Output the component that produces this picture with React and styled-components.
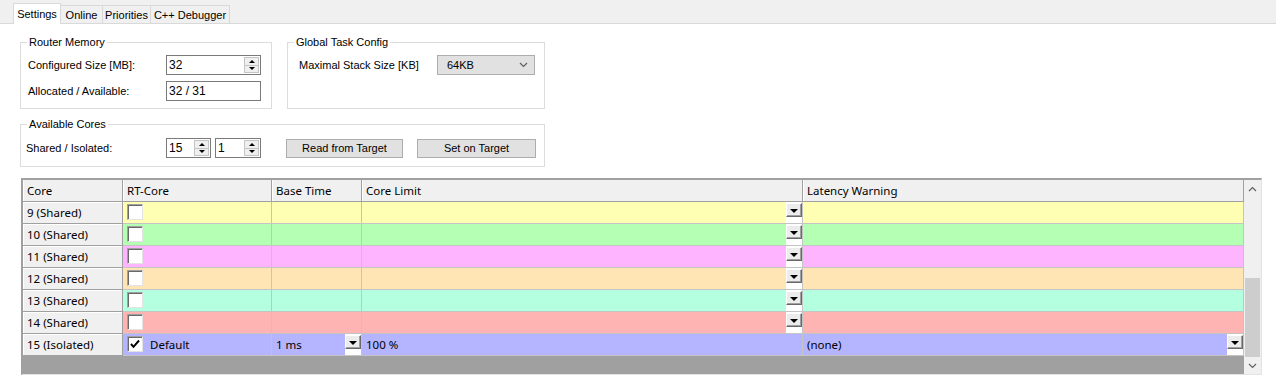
import React from 'react'
import styled, { createGlobalStyle } from 'styled-components'

const GlobalStyle = createGlobalStyle`
  html, body {
    margin: 0;
    padding: 0;
    background: #fff;
  }
  body {
    font-family: "Liberation Sans", Arial, sans-serif;
    font-size: 11px;
    color: #000;
  }
  * {
    box-sizing: border-box;
  }
`

const Window = styled.div`
  width: 1276px;
  height: 384px;
  overflow: hidden;
  background: #fff;
`

const TabStrip = styled.div`
  height: 24px;
  background: #f0f0f0;
  border-bottom: 1px solid #d9d9d9;
  display: flex;
  align-items: flex-end;
  padding-left: 13px;
`

const Tab = styled.div`
  width: ${(p) => p.$w}px;
  height: ${(p) => (p.$active ? 21 : 18)}px;
  margin-bottom: ${(p) => (p.$active ? -1 : 0)}px;
  margin-left: ${(p) => (p.$active ? 0 : -1)}px;
  background: ${(p) => (p.$active ? '#fff' : '#f0f0f0')};
  border: 1px solid #d9d9d9;
  border-bottom: none;
  display: flex;
  align-items: center;
  justify-content: center;
  position: relative;
  z-index: ${(p) => (p.$active ? 1 : 0)};
`

const Content = styled.div`
  padding-left: 20px;
  padding-top: 12px;
`

const TopRow = styled.div`
  display: flex;
  gap: 15px;
`

const Group = styled.fieldset`
  margin: 0;
  padding: 0;
  width: ${(p) => p.$w}px;
  margin-top: ${(p) => p.$mt || 0}px;
  border: 1px solid #dcdcdc;
  min-width: 0;
`

const Legend = styled.legend`
  margin-left: 6px;
  padding: 0 2px;
  line-height: 13px;
  height: 13px;
  font-size: 11px;
  color: #000;
`

const GroupBody = styled.div`
  padding: ${(p) => p.$pt}px 0 ${(p) => p.$pb}px ${(p) => p.$pl}px;
  display: flex;
  flex-direction: column;
  gap: 6px;
`

const FormRow = styled.div`
  display: flex;
  align-items: center;
  height: 20px;
`

const FieldLabel = styled.div`
  width: ${(p) => p.$w}px;
  flex-shrink: 0;
`

const TextBox = styled.div`
  width: ${(p) => p.$w}px;
  height: 20px;
  border: 1px solid #7a7a7a;
  background: #fff;
  display: flex;
  align-items: stretch;
  margin-right: ${(p) => p.$mr || 0}px;
`

const BoxValue = styled.div`
  flex: 1;
  padding-left: 2px;
  display: flex;
  align-items: center;
  font-size: 12px;
`

const SpinButtons = styled.div`
  width: 16px;
  display: flex;
  flex-direction: column;
  padding: 1px 1px 1px 0;
`

const SpinButton = styled.div`
  flex: 1;
  background: #efefef;
  border: 1px solid #c4c4c4;
  display: flex;
  align-items: center;
  justify-content: center;
  & + & {
    border-top: none;
  }
  &::after {
    content: '';
    border-left: 3px solid transparent;
    border-right: 3px solid transparent;
    ${(p) =>
      p.$down ? 'border-top: 3px solid #000;' : 'border-bottom: 3px solid #000;'}
  }
`

const Select = styled.div`
  width: 98px;
  height: 20px;
  background: #e1e1e1;
  border: 1px solid #adadad;
  display: flex;
  align-items: center;
  justify-content: space-between;
  padding: 0 6px 0 9px;
`

const PushButton = styled.div`
  width: ${(p) => p.$w}px;
  height: 19px;
  margin-left: ${(p) => p.$ml}px;
  background: #e1e1e1;
  border: 1px solid #adadad;
  display: flex;
  align-items: center;
  justify-content: center;
`

const Grid = styled.div`
  margin-top: 11px;
  margin-left: 1px;
  width: 1241px;
  height: 197px;
  border-style: solid;
  border-width: 2px 1px 1px 2px;
  border-color: #a0a0a0 #e3e3e3 #e3e3e3 #a0a0a0;
  display: flex;
  font-family: "Noto Sans", "Open Sans", sans-serif;
  font-size: 11.5px;
`

const GridBody = styled.div`
  width: 1221px;
  display: flex;
  flex-direction: column;
`

const GridRow = styled.div`
  display: grid;
  grid-template-columns: 100px 149px 90px 441px 441px;
  height: 22px;
`

const HeaderCell = styled.div`
  background: #f0f0f0;
  border-right: 1px solid #a0a0a0;
  border-bottom: 1px solid #a0a0a0;
  box-shadow: inset 1px 0 0 #fff;
  padding-left: 4px;
  display: flex;
  align-items: center;
  white-space: nowrap;
`

const RowHeader = styled(HeaderCell)`
  box-shadow: inset 1px 1px 0 #fff;
`

const Cell = styled.div`
  background: ${(p) => p.$bg};
  border-right: 1px solid #c4c4c4;
  border-bottom: 1px solid #c4c4c4;
  display: flex;
  align-items: stretch;
  min-width: 0;
`

const CellText = styled.div`
  flex: 1;
  padding-left: ${(p) => p.$pl || 4}px;
  display: flex;
  align-items: center;
  white-space: nowrap;
`

const DropSlot = styled.div`
  width: 16px;
  background: #fff;
  padding-top: 1px;
`

const DropButton = styled.div`
  height: 14px;
  background: #ececec;
  border-style: solid;
  border-width: 1px;
  border-color: #fff #696969 #696969 #fff;
  box-shadow: inset -1px -1px 0 #a0a0a0;
  display: flex;
  align-items: center;
  justify-content: center;
  &::after {
    content: '';
    border-left: 4px solid transparent;
    border-right: 4px solid transparent;
    border-top: 4px solid #000;
    margin-top: 1px;
  }
`

const CheckBox = styled.div`
  width: 16px;
  height: 16px;
  margin: 2px 0 0 4px;
  background: #fff;
  border-style: solid;
  border-width: 1px;
  border-color: #a0a0a0 #e3e3e3 #e3e3e3 #a0a0a0;
  box-shadow: inset 1px 1px 0 #696969;
  flex-shrink: 0;
  display: flex;
  align-items: center;
  justify-content: center;
`

const Workspace = styled.div`
  flex: 1;
  background: #a0a0a0;
`

const ScrollBar = styled.div`
  width: 17px;
  background: #f0f0f0;
  display: flex;
  flex-direction: column;
`

const ScrollArrow = styled.div`
  height: 17px;
  display: flex;
  align-items: center;
  justify-content: center;
`

const ScrollTrack = styled.div`
  flex: 1;
  display: flex;
  flex-direction: column;
  justify-content: flex-end;
  padding: 0 1px;
`

const ScrollThumb = styled.div`
  height: 79px;
  background: #cdcdcd;
`

const Chevron = ({ up }) => (
  <svg width="9" height="6" viewBox="0 0 9 6">
    <polyline
      points={up ? '1,5 4.5,1.5 8,5' : '1,1 4.5,4.5 8,1'}
      fill="none"
      stroke="#606060"
      strokeWidth="1.2"
    />
  </svg>
)

const Check = () => (
  <svg width="12" height="12" viewBox="0 0 12 12">
    <path d="M2 6 L4.5 8.8 L10 2.5" fill="none" stroke="#000" strokeWidth="2" />
  </svg>
)

const Spin = ({ value, w, mr }) => (
  <TextBox $w={w} $mr={mr}>
    <BoxValue>{value}</BoxValue>
    <SpinButtons>
      <SpinButton />
      <SpinButton $down />
    </SpinButtons>
  </TextBox>
)

const rows = [
  { core: '9 (Shared)', bg: '#ffffb4' },
  { core: '10 (Shared)', bg: '#b4ffb4' },
  { core: '11 (Shared)', bg: '#ffb4ff' },
  { core: '12 (Shared)', bg: '#ffe4b4' },
  { core: '13 (Shared)', bg: '#b4ffe0' },
  { core: '14 (Shared)', bg: '#ffb4b4' },
  {
    core: '15 (Isolated)',
    bg: '#b4b4ff',
    rt: true,
    name: 'Default',
    base: '1 ms',
    limit: '100 %',
    latency: '(none)',
  },
]

const CoreRow = ({ row }) => (
  <GridRow>
    <RowHeader>{row.core}</RowHeader>
    <Cell $bg={row.bg}>
      <CheckBox>{row.rt && <Check />}</CheckBox>
      <CellText $pl={7}>{row.name}</CellText>
    </Cell>
    <Cell $bg={row.bg}>
      <CellText>{row.base}</CellText>
      {row.rt && (
        <DropSlot>
          <DropButton />
        </DropSlot>
      )}
    </Cell>
    <Cell $bg={row.bg}>
      <CellText>{row.limit}</CellText>
      {!row.rt && (
        <DropSlot>
          <DropButton />
        </DropSlot>
      )}
    </Cell>
    <Cell $bg={row.bg}>
      <CellText>{row.latency}</CellText>
      {row.rt && (
        <DropSlot>
          <DropButton />
        </DropSlot>
      )}
    </Cell>
  </GridRow>
)

const App = () => {
  return (
    <Window>
      <GlobalStyle />
      <TabStrip>
        <Tab $active $w={48}>Settings</Tab>
        <Tab $w={43}>Online</Tab>
        <Tab $w={49}>Priorities</Tab>
        <Tab $w={80}>C++ Debugger</Tab>
      </TabStrip>
      <Content>
        <TopRow>
          <Group $w={252}>
            <Legend>Router Memory</Legend>
            <GroupBody $pt={6} $pb={7} $pl={7}>
              <FormRow>
                <FieldLabel $w={138}>Configured Size [MB]:</FieldLabel>
                <Spin value="32" w={95} />
              </FormRow>
              <FormRow>
                <FieldLabel $w={138}>Allocated / Available:</FieldLabel>
                <TextBox $w={95}>
                  <BoxValue>32 / 31</BoxValue>
                </TextBox>
              </FormRow>
            </GroupBody>
          </Group>
          <Group $w={258}>
            <Legend>Global Task Config</Legend>
            <GroupBody $pt={6} $pb={7} $pl={11}>
              <FormRow>
                <FieldLabel $w={138}>Maximal Stack Size [KB]</FieldLabel>
                <Select>
                  <span>64KB</span>
                  <Chevron />
                </Select>
              </FormRow>
            </GroupBody>
          </Group>
        </TopRow>
        <Group $w={525} $mt={9}>
          <Legend>Available Cores</Legend>
          <GroupBody $pt={7} $pb={8} $pl={5}>
            <FormRow>
              <FieldLabel $w={140}>Shared / Isolated:</FieldLabel>
              <Spin value="15" w={45} mr={4} />
              <Spin value="1" w={46} />
              <PushButton $w={117} $ml={25}>Read from Target</PushButton>
              <PushButton $w={119} $ml={14}>Set on Target</PushButton>
            </FormRow>
          </GroupBody>
        </Group>
        <Grid>
          <GridBody>
            <GridRow>
              <HeaderCell>Core</HeaderCell>
              <HeaderCell>RT-Core</HeaderCell>
              <HeaderCell>Base Time</HeaderCell>
              <HeaderCell>Core Limit</HeaderCell>
              <HeaderCell>Latency Warning</HeaderCell>
            </GridRow>
            {rows.map((row) => (
              <CoreRow key={row.core} row={row} />
            ))}
            <Workspace />
          </GridBody>
          <ScrollBar>
            <ScrollArrow>
              <Chevron up />
            </ScrollArrow>
            <ScrollTrack>
              <ScrollThumb />
            </ScrollTrack>
            <ScrollArrow>
              <Chevron />
            </ScrollArrow>
          </ScrollBar>
        </Grid>
      </Content>
    </Window>
  )
}

export default App
